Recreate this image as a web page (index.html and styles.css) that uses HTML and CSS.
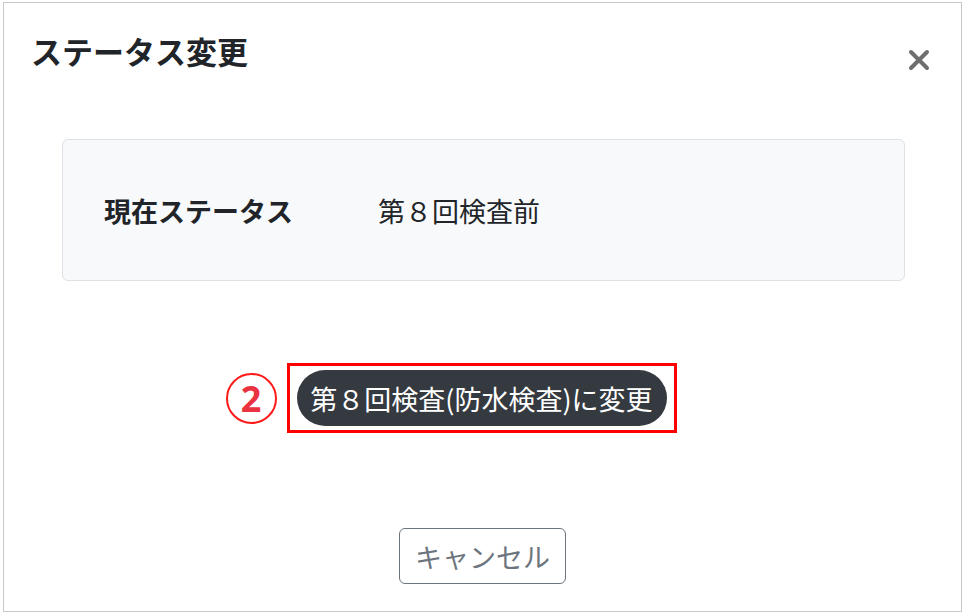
FILE: index.html
```html
<!DOCTYPE html>
<html lang="ja">
<head>
    <meta charset="UTF-8">
    <meta name="viewport" content="width=device-width, initial-scale=1.0">
    <title>ステータス変更</title>
    <link rel="stylesheet" href="styles.css">
</head>
<body>
    <div class="modal">
        <div class="modal-header">
            <h5 class="modal-title">ステータス変更</h5>
            <button class="close" aria-label="閉じる">
                <svg width="24" height="24" viewBox="0 0 24 24">
                    <path d="M4 4 L20 20 M20 4 L4 20" stroke="#6f6f6f" stroke-width="4" stroke-linecap="round"/>
                </svg>
            </button>
        </div>

        <div class="status-box">
            <span class="status-label">現在ステータス</span>
            <span class="status-value">第８回検査前</span>
        </div>

        <div class="action-row">
            <div class="highlight">
                <span class="step-mark">2</span>
                <button class="btn-change">第８回検査(防水検査)に変更</button>
            </div>
        </div>

        <div class="modal-footer">
            <button class="btn-cancel">キャンセル</button>
        </div>
    </div>
</body>
</html>
```

FILE: styles.css
```css
body {
    margin: 0;
    background: #ffffff;
    font-family: 'Noto Sans CJK JP', 'Noto Sans', sans-serif;
    color: #212529;
}
.modal {
    box-sizing: border-box;
    width: 959px;
    height: 610px;
    margin: 2px 0 0 3px;
    border: 1px solid #c9c9c9;
    display: flex;
    flex-direction: column;
}
.modal-header {
    display: flex;
    justify-content: space-between;
    align-items: flex-start;
    padding: 30px 30px 0 27px;
}
.modal-title {
    margin: 0;
    font-size: 31px;
    font-weight: bold;
    line-height: 36px;
}
.close {
    background: none;
    border: none;
    padding: 0;
    margin-top: 15px;
    width: 24px;
    height: 24px;
    cursor: pointer;
}
.status-box {
    box-sizing: border-box;
    margin: 67px 56px 0 58px;
    height: 142px;
    background: #f8f9fa;
    border: 1px solid #dee2e6;
    border-radius: 6px;
    display: flex;
    align-items: center;
    padding-left: 41px;
    font-size: 27px;
}
.status-label {
    font-weight: bold;
    width: 274px;
}
.action-row {
    display: flex;
    justify-content: center;
    margin-top: 82px;
}
.highlight {
    position: relative;
    border: 3px solid #ff0000;
    padding: 4px 7px;
    margin-right: 2px;
}
.step-mark {
    position: absolute;
    left: -64px;
    top: 7px;
    box-sizing: border-box;
    width: 51px;
    height: 51px;
    border: 2px solid #ff1a1a;
    border-radius: 50%;
    color: #ea3340;
    font-family: 'Noto Sans', sans-serif;
    font-weight: bold;
    font-size: 36px;
    line-height: 47px;
    text-align: center;
}
.btn-change {
    background: #343a40;
    color: #ffffff;
    border: none;
    border-radius: 28px;
    height: 56px;
    width: 370px;
    font-family: inherit;
    font-size: 27px;
    padding: 0;
    cursor: pointer;
}
.modal-footer {
    display: flex;
    justify-content: center;
    margin-top: auto;
    padding-bottom: 27px;
}
.btn-cancel {
    background: #ffffff;
    color: #6c757d;
    border: 1px solid #6c757d;
    border-radius: 6px;
    height: 56px;
    width: 167px;
    font-family: inherit;
    font-size: 27px;
    padding: 0;
    cursor: pointer;
}
```
